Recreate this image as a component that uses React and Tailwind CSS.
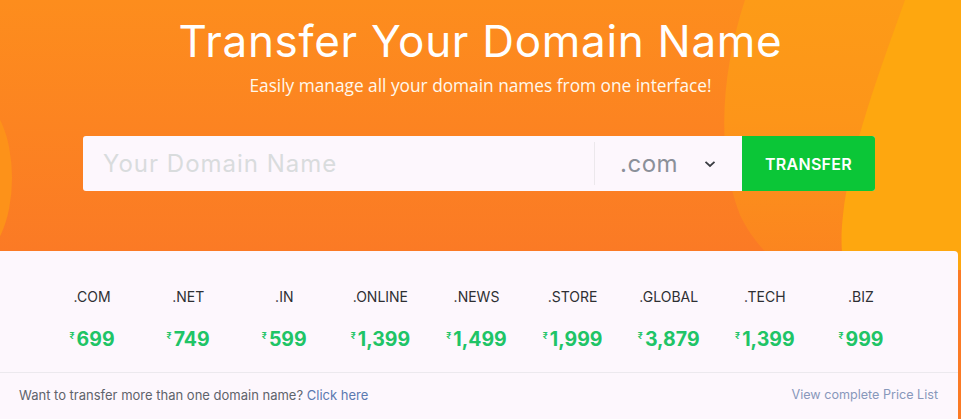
import React from "react";

const tlds = [
  [".COM", "699"],
  [".NET", "749"],
  [".IN", "599"],
  [".ONLINE", "1,399"],
  [".NEWS", "1,499"],
  [".STORE", "1,999"],
  [".GLOBAL", "3,879"],
  [".TECH", "1,399"],
  [".BIZ", "999"],
];

function Background() {
  return (
    <svg
      className="absolute inset-0 h-full w-full"
      viewBox="0 0 961 419"
      preserveAspectRatio="none"
    >
      <defs>
        <linearGradient id="bg" x1="0" y1="0" x2="0" y2="1">
          <stop offset="0" stopColor="#fd8d1d" />
          <stop offset="0.6" stopColor="#fb7a25" />
          <stop offset="1" stopColor="#fb7a25" />
        </linearGradient>
        <linearGradient id="mid" x1="0" y1="0" x2="0" y2="1">
          <stop offset="0" stopColor="#fd9b17" />
          <stop offset="0.45" stopColor="#fd9519" />
          <stop offset="1" stopColor="#fb8320" />
        </linearGradient>
      </defs>
      <rect x="0" y="0" width="961" height="419" fill="url(#bg)" />
      <path
        d="M745 0 C 722 70, 715 150, 740 215 C 752 240, 770 260, 790 270 L 961 270 L 961 0 Z"
        fill="url(#mid)"
      />
      <path
        d="M905 0 C 880 70, 850 150, 843 215 C 840 240, 842 260, 845 270 L 961 270 L 961 0 Z"
        fill="#fea70f"
      />
      <ellipse cx="-24" cy="178" rx="36" ry="78" fill="#fd9219" />
    </svg>
  );
}

export default function App() {
  return (
    <div
      className="relative h-[419px] w-[961px] overflow-hidden"
      style={{ fontFamily: "Inter, 'DejaVu Sans', sans-serif" }}
    >
      <Background />
      <div className="relative flex h-[251px] flex-col items-center pt-[19px]">
        <h1 className="text-[44px] leading-[44px] font-normal tracking-[0.7px] text-white">
          Transfer Your Domain Name
        </h1>
        <p
          className="mt-[14px] text-[17.3px] leading-[18px] text-[#fff8ec]"
          style={{ fontFamily: "'Open Sans', sans-serif" }}
        >
          Easily manage all your domain names from one interface!
        </p>
        <div className="-ml-[3px] mt-[41px] flex h-[55px] w-[792px] overflow-hidden rounded-[3px] bg-[#fdf7fd]">
          <div className="flex flex-1 items-center pl-[20px] text-[24px] tracking-[1px] text-[#d9dcdd]">
            Your Domain Name
          </div>
          <div className="flex w-[148px] items-center py-[6px]">
            <div className="flex h-full w-full items-center border-l border-[#ece8ec] pl-[25px]">
              <span className="text-[24px] tracking-[0.5px] text-[#8b9099]">.com</span>
              <svg
                className="ml-[26px]"
                width="12"
                height="8"
                viewBox="0 0 12 8"
                fill="none"
              >
                <path
                  d="M1.5 1.8 L6 6 L10.5 1.8"
                  stroke="#3a3d42"
                  strokeWidth="1.8"
                />
              </svg>
            </div>
          </div>
          <button className="flex w-[133px] items-center justify-center bg-[#0bc637] text-[16px] font-semibold tracking-[0.3px] text-white">
            TRANSFER
          </button>
        </div>
      </div>
      <div className="relative mr-[3px] h-[168px] rounded-tr-[4px] bg-[#fdf7fd]">
        <div className="h-[122px] border-b border-[#ece9ee] pl-[44px] pt-[39px]">
          <div className="grid w-[865px] grid-cols-9">
            {tlds.map(([t, p]) => (
              <div key={t} className="flex flex-col items-center">
                <div className="text-[14px] leading-[14px] text-[#2e2f33]">{t}</div>
                <div className="mt-[26px] flex items-start text-[#20c466]">
                  <span className="mr-[2px] mt-[1px] text-[9px] leading-[9px] font-semibold">
                    ₹
                  </span>
                  <span className="text-[19.5px] leading-[19px] font-bold">{p}</span>
                </div>
              </div>
            ))}
          </div>
        </div>
        <div className="flex h-[45px] items-center justify-between pl-[19px] pr-[20px] text-[13px]">
          <span className="text-[#5f636b]">
            Want to transfer more than one domain name?{" "}
            <span className="text-[#5b79b0]">Click here</span>
          </span>
          <span className="text-[12.6px] text-[#8898bb]">View complete Price List</span>
        </div>
      </div>
    </div>
  );
}
